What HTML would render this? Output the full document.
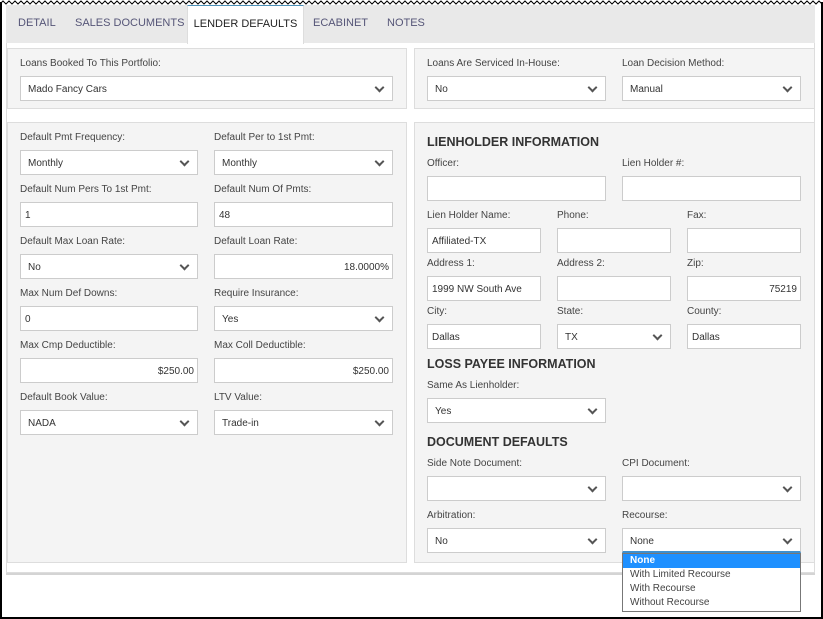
<!DOCTYPE html>
<html><head><meta charset="utf-8"><style>
*{box-sizing:border-box;margin:0;padding:0}
body{width:823px;height:619px;position:relative;background:#fff;font-family:"Liberation Sans",Arial,sans-serif;font-size:10.5px;color:#444;overflow:hidden}
.a{position:absolute}
.frame{left:0;top:2px;width:823px;height:617px;border:2px solid #000;border-top:none}
.tabs{left:6px;top:5px;width:809px;height:38px;background:#e9e9e9}
.tab{position:absolute;top:12px;font-size:11px;color:#557}
.act{left:187px;top:5px;width:117px;height:39px;background:#fff;border-top:1px solid #4a90b8;border-left:1px solid #ddd;border-right:1px solid #ddd;font-size:11px;color:#222;text-align:center;padding-top:12px}
.outer{left:6px;top:43px;width:809px;height:530px;border:1px solid #ddd;border-top:none;box-shadow:0 2px 0 #d4d4d4}
.p{background:#f4f4f4;border:1px solid #ddd}
.l{position:absolute;font-size:10px;color:#444}
.i{position:absolute;height:25px;background:#fff;border:1px solid #ccc;font-size:10px;color:#333;padding:7px 3px 0 4px;white-space:nowrap}
.s{padding-left:7px}
.s::after{content:"";position:absolute;right:9px;top:7px;width:5px;height:5px;border-right:2px solid #555;border-bottom:2px solid #555;transform:rotate(45deg)}
.r{text-align:right}
.h{position:absolute;font-size:12.5px;font-weight:bold;color:#333}
.dd{left:622px;top:553px;width:179px;height:59px;background:#fff;border:1px solid #777;font-size:10px;color:#444}
.dd div{height:14px;padding-left:7px;line-height:14px}
</style></head><body>
<svg class="a" style="left:0;top:0" width="823" height="6"><polyline fill="none" stroke="#000" stroke-width="1" points="0,4 3,1 6,4 9,1 12,4 15,1 18,4 21,1 24,4 27,1 30,4 33,1 36,4 39,1 42,4 45,1 48,4 51,1 54,4 57,1 60,4 63,1 66,4 69,1 72,4 75,1 78,4 81,1 84,4 87,1 90,4 93,1 96,4 99,1 102,4 105,1 108,4 111,1 114,4 117,1 120,4 123,1 126,4 129,1 132,4 135,1 138,4 141,1 144,4 147,1 150,4 153,1 156,4 159,1 162,4 165,1 168,4 171,1 174,4 177,1 180,4 183,1 186,4 189,1 192,4 195,1 198,4 201,1 204,4 207,1 210,4 213,1 216,4 219,1 222,4 225,1 228,4 231,1 234,4 237,1 240,4 243,1 246,4 249,1 252,4 255,1 258,4 261,1 264,4 267,1 270,4 273,1 276,4 279,1 282,4 285,1 288,4 291,1 294,4 297,1 300,4 303,1 306,4 309,1 312,4 315,1 318,4 321,1 324,4 327,1 330,4 333,1 336,4 339,1 342,4 345,1 348,4 351,1 354,4 357,1 360,4 363,1 366,4 369,1 372,4 375,1 378,4 381,1 384,4 387,1 390,4 393,1 396,4 399,1 402,4 405,1 408,4 411,1 414,4 417,1 420,4 423,1 426,4 429,1 432,4 435,1 438,4 441,1 444,4 447,1 450,4 453,1 456,4 459,1 462,4 465,1 468,4 471,1 474,4 477,1 480,4 483,1 486,4 489,1 492,4 495,1 498,4 501,1 504,4 507,1 510,4 513,1 516,4 519,1 522,4 525,1 528,4 531,1 534,4 537,1 540,4 543,1 546,4 549,1 552,4 555,1 558,4 561,1 564,4 567,1 570,4 573,1 576,4 579,1 582,4 585,1 588,4 591,1 594,4 597,1 600,4 603,1 606,4 609,1 612,4 615,1 618,4 621,1 624,4 627,1 630,4 633,1 636,4 639,1 642,4 645,1 648,4 651,1 654,4 657,1 660,4 663,1 666,4 669,1 672,4 675,1 678,4 681,1 684,4 687,1 690,4 693,1 696,4 699,1 702,4 705,1 708,4 711,1 714,4 717,1 720,4 723,1 726,4 729,1 732,4 735,1 738,4 741,1 744,4 747,1 750,4 753,1 756,4 759,1 762,4 765,1 768,4 771,1 774,4 777,1 780,4 783,1 786,4 789,1 792,4 795,1 798,4 801,1 804,4 807,1 810,4 813,1 816,4 819,1 822,4"/></svg>
<div class="a frame"></div>
<div class="a tabs">
<span class="tab" style="left:12px">DETAIL</span>
<span class="tab" style="left:69px">SALES DOCUMENTS</span>
<span class="tab" style="left:307px">ECABINET</span>
<span class="tab" style="left:381px">NOTES</span>
</div>
<div class="a act">LENDER DEFAULTS</div>
<div class="a outer"></div>

<div class="a p" style="left:7px;top:48px;width:400px;height:61px"></div>
<div class="a p" style="left:414px;top:48px;width:401px;height:61px"></div>
<div class="a p" style="left:7px;top:122px;width:400px;height:441px"></div>
<div class="a p" style="left:414px;top:122px;width:401px;height:441px"></div>

<div class="l" style="left:20px;top:58px">Loans Booked To This Portfolio:</div>
<div class="i s" style="left:20px;top:76px;width:373px">Mado Fancy Cars</div>
<div class="l" style="left:427px;top:58px">Loans Are Serviced In-House:</div>
<div class="i s" style="left:427px;top:76px;width:179px">No</div>
<div class="l" style="left:622px;top:58px">Loan Decision Method:</div>
<div class="i s" style="left:622px;top:76px;width:179px">Manual</div>

<div class="l" style="left:20px;top:132px">Default Pmt Frequency:</div>
<div class="i s" style="left:20px;top:150px;width:178px">Monthly</div>
<div class="l" style="left:214px;top:132px">Default Per to 1st Pmt:</div>
<div class="i s" style="left:214px;top:150px;width:179px">Monthly</div>
<div class="l" style="left:20px;top:184px">Default Num Pers To 1st Pmt:</div>
<div class="i" style="left:20px;top:202px;width:178px">1</div>
<div class="l" style="left:214px;top:184px">Default Num Of Pmts:</div>
<div class="i" style="left:214px;top:202px;width:179px">48</div>
<div class="l" style="left:20px;top:236px">Default Max Loan Rate:</div>
<div class="i s" style="left:20px;top:254px;width:178px">No</div>
<div class="l" style="left:214px;top:236px">Default Loan Rate:</div>
<div class="i r" style="left:214px;top:254px;width:179px">18.0000%</div>
<div class="l" style="left:20px;top:288px">Max Num Def Downs:</div>
<div class="i" style="left:20px;top:306px;width:178px">0</div>
<div class="l" style="left:214px;top:288px">Require Insurance:</div>
<div class="i s" style="left:214px;top:306px;width:179px">Yes</div>
<div class="l" style="left:20px;top:340px">Max Cmp Deductible:</div>
<div class="i r" style="left:20px;top:358px;width:178px">$250.00</div>
<div class="l" style="left:214px;top:340px">Max Coll Deductible:</div>
<div class="i r" style="left:214px;top:358px;width:179px">$250.00</div>
<div class="l" style="left:20px;top:392px">Default Book Value:</div>
<div class="i s" style="left:20px;top:410px;width:178px">NADA</div>
<div class="l" style="left:214px;top:392px">LTV Value:</div>
<div class="i s" style="left:214px;top:410px;width:179px">Trade-in</div>

<div class="h" style="left:427px;top:135px">LIENHOLDER INFORMATION</div>
<div class="l" style="left:427px;top:158px">Officer:</div>
<div class="i" style="left:427px;top:176px;width:179px"></div>
<div class="l" style="left:622px;top:158px">Lien Holder #:</div>
<div class="i" style="left:622px;top:176px;width:179px"></div>
<div class="l" style="left:427px;top:210px">Lien Holder Name:</div>
<div class="i" style="left:427px;top:228px;width:114px">Affiliated-TX</div>
<div class="l" style="left:557px;top:210px">Phone:</div>
<div class="i" style="left:557px;top:228px;width:114px"></div>
<div class="l" style="left:687px;top:210px">Fax:</div>
<div class="i" style="left:687px;top:228px;width:114px"></div>
<div class="l" style="left:427px;top:258px">Address 1:</div>
<div class="i" style="left:427px;top:276px;width:114px">1999 NW South Ave</div>
<div class="l" style="left:557px;top:258px">Address 2:</div>
<div class="i" style="left:557px;top:276px;width:114px"></div>
<div class="l" style="left:687px;top:258px">Zip:</div>
<div class="i r" style="left:687px;top:276px;width:114px">75219</div>
<div class="l" style="left:427px;top:306px">City:</div>
<div class="i" style="left:427px;top:324px;width:114px">Dallas</div>
<div class="l" style="left:557px;top:306px">State:</div>
<div class="i s" style="left:557px;top:324px;width:114px">TX</div>
<div class="l" style="left:687px;top:306px">County:</div>
<div class="i" style="left:687px;top:324px;width:114px">Dallas</div>

<div class="h" style="left:427px;top:357px">LOSS PAYEE INFORMATION</div>
<div class="l" style="left:427px;top:380px">Same As Lienholder:</div>
<div class="i s" style="left:427px;top:398px;width:179px">Yes</div>

<div class="h" style="left:427px;top:435px">DOCUMENT DEFAULTS</div>
<div class="l" style="left:427px;top:458px">Side Note Document:</div>
<div class="i s" style="left:427px;top:476px;width:179px"></div>
<div class="l" style="left:622px;top:458px">CPI Document:</div>
<div class="i s" style="left:622px;top:476px;width:179px"></div>
<div class="l" style="left:427px;top:510px">Arbitration:</div>
<div class="i s" style="left:427px;top:528px;width:179px">No</div>
<div class="l" style="left:622px;top:510px">Recourse:</div>
<div class="i s" style="left:622px;top:528px;width:179px;border-bottom:2px solid #3b8fd0">None</div>
<div class="a dd">
<div style="background:#1e90ff;color:#fff;font-weight:bold">None</div>
<div>With Limited Recourse</div>
<div>With Recourse</div>
<div>Without Recourse</div>
</div>
</body></html>
